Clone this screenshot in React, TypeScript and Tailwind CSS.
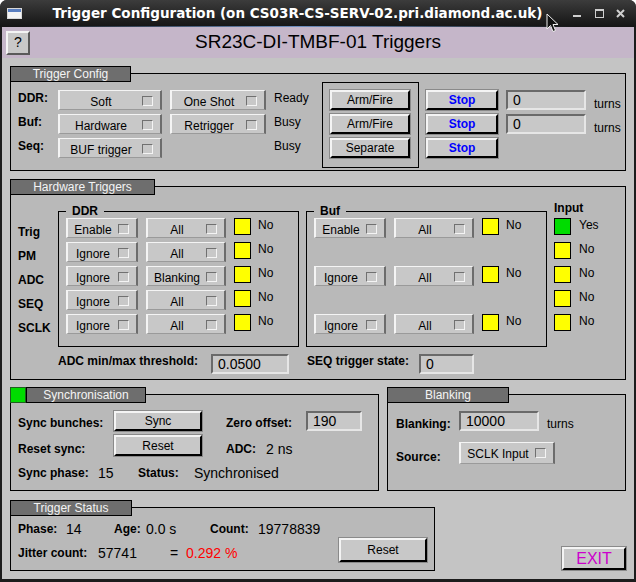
import React from "react";

function MenuButton({ label, className = "" }: { label: string; className?: string }) {
  return (
    <div
      className={`flex h-[20px] items-start border-t border-l-2 border-r-2 border-b border-t-[#f4f4f4] border-l-[#f4f4f4] border-r-[#6c6c6c] border-b-[#9a9a9a] bg-[#c8c8c8] ${className}`}
    >
      <span className="flex-1 pt-[4px] text-center text-[12px] leading-[14px]">{label}</span>
      <span className="mt-[5px] mr-[7px] h-[10px] w-[11px] border border-t-[#707070] border-l-[#707070] border-r-[#f4f4f4] border-b-[#f4f4f4]" />
    </div>
  );
}

function PushButton({ label, className = "" }: { label: string; className?: string }) {
  return (
    <div
      className={`flex items-center justify-center border-2 border-t-[#f4f4f4] border-l-[#f4f4f4] border-r-black border-b-black bg-[#c8c8c8] ring-1 ring-[#8a8a8a] ${className}`}
    >
      {label}
    </div>
  );
}

function Field({ value, className = "" }: { value: string; className?: string }) {
  return (
    <div
      className={`flex h-[20px] items-center border-2 border-t-[#6a6a6a] border-l-[#6a6a6a] border-r-[#e6e6e6] border-b-[#e6e6e6] bg-[#c8c8c8] pl-[5px] text-[14px] leading-[16px] ${className}`}
    >
      {value}
    </div>
  );
}

function Group({
  title,
  tabW,
  led,
  className = "",
  children,
}: {
  title: string;
  tabW: string;
  led?: boolean;
  className?: string;
  children: React.ReactNode;
}) {
  return (
    <div className={`relative border border-black bg-[#b9b9b9] ${className}`}>
      <div className="absolute -top-[8px] -left-[1px] flex">
        {led && <div className="h-[16px] w-[16px] border border-[#1f5f1f] bg-[#00dc00]" />}
        <div
          className={`h-[16px] border border-black bg-[#6e6e6e] text-center text-[12px] leading-[14px] text-[#f4f4f4] ${tabW}`}
        >
          {title}
        </div>
      </div>
      {children}
    </div>
  );
}

function SubFrame({ title, children }: { title: string; children: React.ReactNode }) {
  return (
    <div className="relative mt-[24px] h-[136px] w-[241px] border border-black pl-[7px] pt-[6px]">
      <span className="absolute -top-[8px] left-[7px] bg-[#b9b9b9] px-[6px] text-[12px] leading-[14px] font-bold">
        {title}
      </span>
      <div className="flex flex-col gap-[4px]">{children}</div>
    </div>
  );
}

function Led({ on }: { on?: boolean }) {
  return <div className={`h-[17px] w-[17px] border border-black ${on ? "bg-[#00dc00]" : "bg-[#ffff00]"}`} />;
}

function TrigRow({ a, b }: { a: string; b: string }) {
  return (
    <div className="flex h-[20px] items-start">
      <MenuButton label={a} className="w-[72px]" />
      <MenuButton label={b} className="ml-[8px] w-[80px]" />
      <div className="ml-[8px]">
        <Led />
      </div>
      <span className="ml-[7px] text-[12px] leading-[14px]">No</span>
    </div>
  );
}

export default function App() {
  const ddr = [
    ["Enable", "All"],
    ["Ignore", "All"],
    ["Ignore", "Blanking"],
    ["Ignore", "All"],
    ["Ignore", "All"],
  ];
  const inputs = ["Yes", "No", "No", "No", "No"];

  return (
    <div className="relative flex h-[582px] w-[636px] flex-col overflow-hidden rounded-t-[7px] bg-[#1c1c1c] font-['Liberation_Sans',Arial,sans-serif] text-black">
      {/* title bar */}
      <div className="relative flex h-[27px] items-center bg-gradient-to-b from-[#3c3c3c] to-[#151515]">
        <div className="ml-[7px] flex h-[11px] w-[15px] flex-col border border-[#d8d8d8] bg-[#f4f4f4]">
          <div className="h-[3px] bg-[#5a7fc0]" />
        </div>
        <div className="flex-1 text-center font-['DejaVu_Sans',sans-serif] text-[13.5px] font-bold text-white">
          Trigger Configuration (on CS03R-CS-SERV-02.pri.diamond.ac.uk)
        </div>
        <div className="mr-[11px] flex w-[52px] items-center justify-between">
          <svg width="9" height="9" viewBox="0 0 9 9">
            <rect x="0" y="6" width="8" height="2" fill="#cfcfcf" />
          </svg>
          <svg width="9" height="9" viewBox="0 0 9 9">
            <rect x="0.5" y="0.5" width="8" height="8" fill="none" stroke="#cfcfcf" />
            <rect x="0" y="0" width="9" height="2" fill="#cfcfcf" />
          </svg>
          <svg width="9" height="9" viewBox="0 0 9 9">
            <path d="M1 1 L8 8 M8 1 L1 8" stroke="#cfcfcf" strokeWidth="2" />
          </svg>
        </div>
        <div className="absolute bottom-0 left-[20px] right-[60px] h-[1px] bg-gradient-to-r from-transparent via-[#6f8fbf] to-transparent" />
      </div>

      {/* body */}
      <div className="mx-[2px] mb-[3px] flex flex-1 flex-col bg-[#c4c4c4]">
        <div className="flex h-[31px] items-center bg-[#c5b6c9]">
          <div className="ml-[4px] flex h-[24px] w-[24px] items-center justify-center border-2 border-t-[#f4f4f4] border-l-[#f4f4f4] border-r-[#5a5a5a] border-b-[#5a5a5a] bg-[#c8c8c8] text-[14px]">
            ?
          </div>
          <div className="flex-1 pr-[28px] text-center text-[19px]">SR23C-DI-TMBF-01 Triggers</div>
        </div>

        <div className="flex flex-col pl-[8px] pr-[8px]">
          {/* Trigger Config */}
          <Group title="Trigger Config" tabW="w-[121px]" className="mt-[15px] h-[98px]">
            <div className="flex items-start pl-[7px]">
              <div className="mt-[16px] flex flex-col gap-[4px]">
                {[
                  ["DDR:", "Soft", "One Shot", "Ready"],
                  ["Buf:", "Hardware", "Retrigger", "Busy"],
                  ["Seq:", "BUF trigger", "", "Busy"],
                ].map(([l, a, b, s]) => (
                  <div key={l} className="flex h-[20px] items-start">
                    <span className="w-[40px] pt-[1px] text-[12px] leading-[14px] font-bold">{l}</span>
                    <MenuButton label={a} className="w-[104px]" />
                    {b ? <MenuButton label={b} className="ml-[8px] w-[96px]" /> : <div className="ml-[8px] w-[96px]" />}
                    <span className="ml-[8px] w-[48px] pt-[1px] text-[12px] leading-[14px]">{s}</span>
                  </div>
                ))}
              </div>
              <div className="mt-[8px] flex h-[86px] w-[97px] flex-col gap-[4px] border border-black pl-[7px] pt-[7px]">
                <PushButton label="Arm/Fire" className="h-[20px] w-[80px] text-[12px]" />
                <PushButton label="Arm/Fire" className="h-[20px] w-[80px] text-[12px]" />
                <PushButton label="Separate" className="h-[20px] w-[80px] text-[12px]" />
              </div>
              <div className="mt-[16px] ml-[7px] flex flex-col gap-[4px]">
                {[0, 1, 2].map((i) => (
                  <PushButton key={i} label="Stop" className="h-[20px] w-[72px] text-[12px] font-bold text-[#0000ff]" />
                ))}
              </div>
              <div className="mt-[16px] ml-[8px] flex flex-col gap-[4px]">
                {[0, 1].map((i) => (
                  <div key={i} className="flex h-[20px] items-start">
                    <Field value="0" className="w-[80px]" />
                    <span className="ml-[8px] pt-[7px] text-[12px] leading-[14px]">turns</span>
                  </div>
                ))}
              </div>
            </div>
          </Group>

          {/* Hardware Triggers */}
          <Group title="Hardware Triggers" tabW="w-[145px]" className="mt-[15px] h-[194px]">
            <div className="flex items-start pl-[7px]">
              <div className="mt-[38px] flex w-[40px] flex-col gap-[10px] text-[12px] leading-[14px] font-bold">
                <span>Trig</span>
                <span>PM</span>
                <span>ADC</span>
                <span>SEQ</span>
                <span>SCLK</span>
              </div>
              <SubFrame title="DDR">
                {ddr.map(([a, b], i) => (
                  <TrigRow key={i} a={a} b={b} />
                ))}
              </SubFrame>
              <div className="ml-[7px]">
                <SubFrame title="Buf">
                  <TrigRow a="Enable" b="All" />
                  <div className="h-[20px]" />
                  <TrigRow a="Ignore" b="All" />
                  <div className="h-[20px]" />
                  <TrigRow a="Ignore" b="All" />
                </SubFrame>
              </div>
              <div className="mt-[14px] ml-[7px] flex flex-col">
                <span className="h-[17px] text-[12px] leading-[14px] font-bold">Input</span>
                <div className="flex flex-col gap-[4px]">
                  {inputs.map((t, i) => (
                    <div key={i} className="flex h-[20px] items-start">
                      <Led on={i === 0} />
                      <span className="ml-[8px] text-[12px] leading-[14px]">{t}</span>
                    </div>
                  ))}
                </div>
              </div>
            </div>
            <div className="mt-[7px] ml-[47px] flex items-start">
              <span className="w-[153px] text-[12px] leading-[14px] font-bold">ADC min/max threshold:</span>
              <Field value="0.0500" className="w-[78px]" />
              <span className="ml-[18px] w-[112px] text-[12px] leading-[14px] font-bold">SEQ trigger state:</span>
              <Field value="0" className="w-[55px]" />
            </div>
          </Group>

          {/* Synchronisation + Blanking */}
          <div className="mt-[14px] flex gap-[8px]">
            <Group title="Synchronisation" tabW="w-[120px]" led className="h-[97px] w-[369px]">
              <div className="flex flex-col pl-[7px] pt-[16px] text-[12px] leading-[14px]">
                <div className="flex h-[20px] items-start">
                  <span className="w-[96px] pt-[5px] font-bold">Sync bunches:</span>
                  <PushButton label="Sync" className="h-[20px] w-[88px]" />
                  <span className="ml-[24px] w-[80px] pt-[5px] font-bold">Zero offset:</span>
                  <Field value="190" className="w-[56px]" />
                </div>
                <div className="mt-[4px] flex h-[20px] items-start">
                  <span className="w-[96px] pt-[7px] font-bold">Reset sync:</span>
                  <PushButton label="Reset" className="h-[21px] w-[88px]" />
                  <span className="ml-[24px] w-[40px] pt-[7px] font-bold">ADC:</span>
                  <span className="pt-[6px] text-[14px] leading-[16px]">2 ns</span>
                </div>
                <div className="mt-[8px] flex h-[20px] items-center">
                  <span className="w-[80px] font-bold">Sync phase:</span>
                  <span className="w-[40px] text-[14px] leading-[16px]">15</span>
                  <span className="w-[56px] font-bold">Status:</span>
                  <span className="text-[14px] leading-[16px]">Synchronised</span>
                </div>
              </div>
            </Group>
            <Group title="Blanking" tabW="w-[122px]" className="h-[97px] flex-1">
              <div className="flex flex-col pl-[8px] pt-[16px] text-[12px] leading-[14px]">
                <div className="flex h-[20px] items-start">
                  <span className="w-[63px] pt-[6px] font-bold">Blanking:</span>
                  <Field value="10000" className="w-[80px]" />
                  <span className="ml-[8px] pt-[6px]">turns</span>
                </div>
                <div className="mt-[11px] flex h-[22px] items-start">
                  <span className="w-[63px] pt-[8px] font-bold">Source:</span>
                  <MenuButton label="SCLK Input" className="h-[22px] w-[96px]" />
                </div>
              </div>
            </Group>
          </div>

          {/* Trigger Status + EXIT */}
          <div className="mt-[16px] flex items-end">
            <Group title="Trigger Status" tabW="w-[122px]" className="h-[64px] w-[425px]">
              <div className="flex">
                <div className="flex flex-col gap-[8px] pl-[7px] pt-[13px] text-[12px] leading-[14px]">
                  <div className="flex h-[16px] items-center">
                    <span className="w-[48px] font-bold">Phase:</span>
                    <span className="w-[48px] text-[14px] leading-[16px]">14</span>
                    <span className="w-[32px] font-bold">Age:</span>
                    <span className="w-[64px] text-[14px] leading-[16px]">0.0 s</span>
                    <span className="w-[48px] font-bold">Count:</span>
                    <span className="text-[14px] leading-[16px]">19778839</span>
                  </div>
                  <div className="flex h-[16px] items-center">
                    <span className="w-[80px] font-bold">Jitter count:</span>
                    <span className="w-[72px] text-[14px] leading-[16px]">57741</span>
                    <span className="w-[16px] text-[14px] leading-[16px]">=</span>
                    <span className="text-[14px] leading-[16px] text-[#ff0000]">0.292 %</span>
                  </div>
                </div>
                <PushButton label="Reset" className="mt-[30px] mr-[7px] ml-auto h-[24px] w-[88px] text-[12px]" />
              </div>
            </Group>
            <PushButton
              label="EXIT"
              className="mb-[1px] ml-auto h-[23px] w-[64px] text-[16px] text-[#cc00cc]"
            />
          </div>
        </div>
      </div>

      {/* mouse pointer */}
      <svg className="absolute left-[546px] top-[13px]" width="13" height="20" viewBox="0 0 13 20">
        <path d="M1 1 L1 16 L4.5 12.5 L7 18.5 L9.5 17.5 L7 11.5 L12 11.5 Z" fill="#111" stroke="#f0f0f0" strokeWidth="1" />
      </svg>
    </div>
  );
}
